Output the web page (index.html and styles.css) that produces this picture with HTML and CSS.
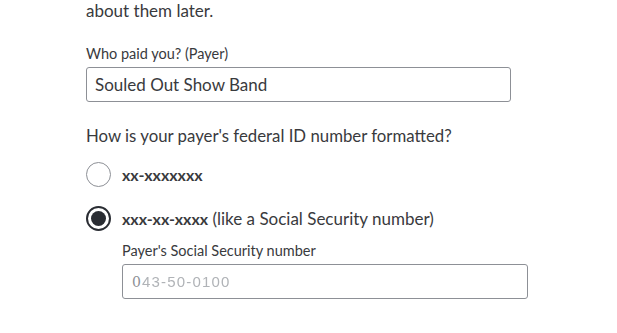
FILE: index.html
```html
<!DOCTYPE html>
<html>
<head>
<meta charset="utf-8">
<link rel="stylesheet" href="styles.css">
</head>
<body>
<main class="page">
  <p class="intro">about them later.</p>
  <div class="field">
    <label class="label">Who paid you? (Payer)</label>
    <div class="input">Souled Out Show Band</div>
  </div>
  <h2 class="question">How is your payer's federal ID number formatted?</h2>
  <div class="options">
    <div class="option">
      <span class="radio"></span>
      <span class="opt-text"><b>xx-xxxxxxx</b></span>
    </div>
    <div class="option">
      <span class="radio checked"><span class="dot"></span></span>
      <span class="opt-text"><b>xxx-xx-xxxx</b> (like a Social Security number)</span>
    </div>
    <div class="field sub">
      <label class="label">Payer's Social Security number</label>
      <div class="input small"><span class="first">0</span><span class="masked">43-50-0100</span></div>
    </div>
  </div>
</main>
</body>
</html>
```
FILE: styles.css
```css
html, body { margin: 0; padding: 0; background: #fff; }
body { font-family: "Lato", "Noto Sans", sans-serif; color: #393a3d; }
.page { padding: 0 0 0 86px; width: 442px; }
.intro { margin: 0; padding-top: 1px; font-size: 17px; line-height: 20px; }
.field { display: flex; flex-direction: column; margin-top: 24px; }
.label { font-size: 14.5px; line-height: 18px; margin-bottom: 4px; }
.input { box-sizing: border-box; width: 425px; height: 35px; border: 1px solid #8d9096; border-radius: 3px; padding: 0 8px; display: flex; align-items: center; font-size: 17px; color: #393a3d; }
.question { margin: 23px 0 0; font-size: 16.8px; font-weight: 400; line-height: 22px; }
.options { display: flex; flex-direction: column; gap: 19px; margin-top: 15px; }
.option { display: flex; align-items: center; gap: 11px; height: 25px; }
.radio { box-sizing: border-box; width: 25px; height: 25px; border-radius: 50%; border: 1px solid #8d9096; display: flex; align-items: center; justify-content: center; flex: none; }
.radio.checked { border: 2px solid #2a2d33; }
.dot { width: 15px; height: 15px; border-radius: 50%; background: #2a2d33; }
.opt-text { font-size: 17px; }
.opt-text b { font-size: 16px; font-weight: 700; }
.sub { margin: -8px 0 0 36px; }
.input.small { width: 406px; }
.first { color: #8d9096; font-family: "DejaVu Serif", serif; font-size: 14px; margin-left: 1px; margin-right: 1px; }
.masked { color: #b0b3b7; filter: blur(0.6px); font-family: "Liberation Sans", sans-serif; font-size: 15px; letter-spacing: 1.2px; }
```
